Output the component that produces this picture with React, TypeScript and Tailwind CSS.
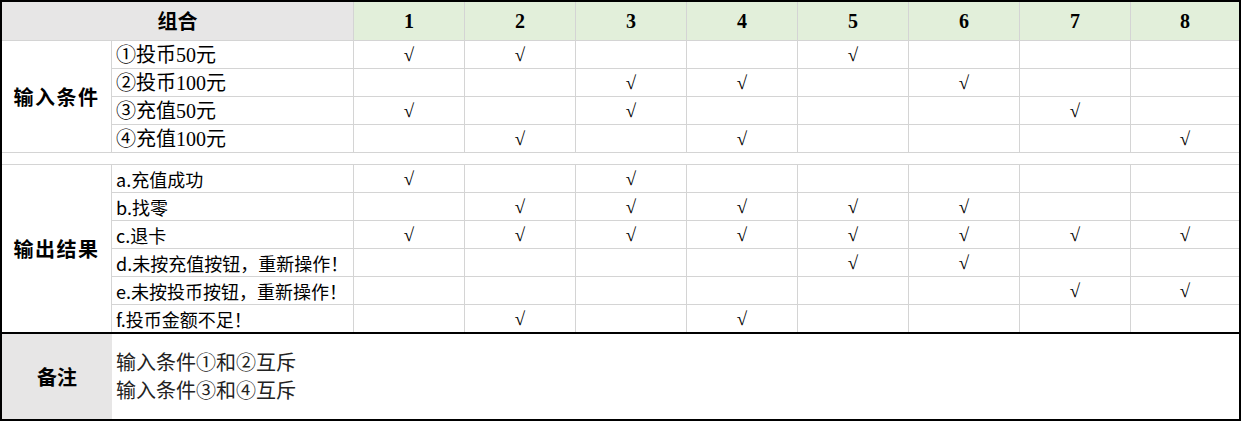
const inputs: [string, number[]][] = [
  ['①投币50元', [1, 2, 5]],
  ['②投币100元', [3, 4, 6]],
  ['③充值50元', [1, 3, 7]],
  ['④充值100元', [2, 4, 8]],
];

const outputs: [string, number[]][] = [
  ['a.充值成功', [1, 3]],
  ['b.找零', [2, 3, 4, 5, 6]],
  ['c.退卡', [1, 2, 3, 4, 5, 6, 7, 8]],
  ['d.未按充值按钮，重新操作！', [5, 6]],
  ['e.未按投币按钮，重新操作！', [7, 8]],
  ['f.投币金额不足！', [2, 4]],
];

const cols = [1, 2, 3, 4, 5, 6, 7, 8];

function CheckCell({ on, col, last }: { on: boolean; col: number; last?: boolean }) {
  return (
    <div
      className={`flex items-center justify-center border-[#d4d4d4] ${col < 8 ? 'border-r' : ''} ${
        last ? '' : 'border-b'
      }`}
    >
      {on && (
        <span className="font-['Liberation_Serif','Noto_Sans_CJK_SC',serif] text-[19px] leading-none text-black">
          √
        </span>
      )}
    </div>
  );
}

export default function App() {
  return (
    <div className="w-[1241px] h-[421px] border-2 border-black bg-white text-black flex flex-col">
      {/* Decision table */}
      <div className="grid grid-cols-[110px_242px_repeat(7,111px)_108px] grid-rows-[39px_repeat(4,28px)_12px_repeat(5,28px)_27px]">
        {/* Header */}
        <div className="col-span-2 flex items-center justify-center bg-[#e7e6e6] border-r border-b border-[#d4d4d4] font-['Noto_Sans_CJK_SC',sans-serif] text-[20px] font-bold">
          组合
        </div>
        {cols.map((c) => (
          <div
            key={c}
            className={`flex items-center justify-center bg-[#e2efda] border-b border-[#d4d4d4] font-['Liberation_Serif',serif] text-[20px] font-bold ${
              c < 8 ? 'border-r' : ''
            }`}
          >
            {c}
          </div>
        ))}

        {/* Input conditions */}
        <div className="row-span-4 flex items-center justify-center border-r border-b border-[#d4d4d4] font-['Noto_Sans_CJK_SC',sans-serif] text-[20px] font-bold tracking-[1.5px]">
          输入条件
        </div>
        {inputs.map(([label, checks]) => (
          <div key={label} className="contents">
            <div className="flex items-center pl-[4px] border-r border-b border-[#d4d4d4] font-['Liberation_Serif','Noto_Sans_CJK_SC',serif] text-[20px] leading-none">
              {label}
            </div>
            {cols.map((c) => (
              <CheckCell key={c} col={c} on={checks.includes(c)} />
            ))}
          </div>
        ))}

        {/* Spacer row */}
        <div className="col-span-10 border-b border-[#d4d4d4]" />

        {/* Output results */}
        <div className="row-span-6 flex items-center justify-center border-r border-[#d4d4d4] font-['Noto_Sans_CJK_SC',sans-serif] text-[20px] font-bold tracking-[1.5px]">
          输出结果
        </div>
        {outputs.map(([label, checks], i) => {
          const last = i === outputs.length - 1;
          return (
            <div key={label} className="contents">
              <div
                className={`flex items-center pl-[4px] border-r border-[#d4d4d4] font-['Noto_Sans_CJK_SC',sans-serif] text-[18px] leading-none ${
                  last ? '' : 'border-b'
                }`}
              >
                {label}
              </div>
              {cols.map((c) => (
                <CheckCell key={c} col={c} last={last} on={checks.includes(c)} />
              ))}
            </div>
          );
        })}
      </div>

      {/* Remarks */}
      <div className="flex flex-1 border-t-2 border-black">
        <div className="w-[110px] flex items-center justify-center bg-[#e7e6e6] font-['Noto_Sans_CJK_SC',sans-serif] text-[20px] font-bold">
          备注
        </div>
        <div className="flex flex-col justify-center pl-[4px] font-['Liberation_Serif','Noto_Sans_CJK_SC',serif] text-[20px] leading-[28px] text-[#222]">
          <span>输入条件①和②互斥</span>
          <span>输入条件③和④互斥</span>
        </div>
      </div>
    </div>
  );
}
